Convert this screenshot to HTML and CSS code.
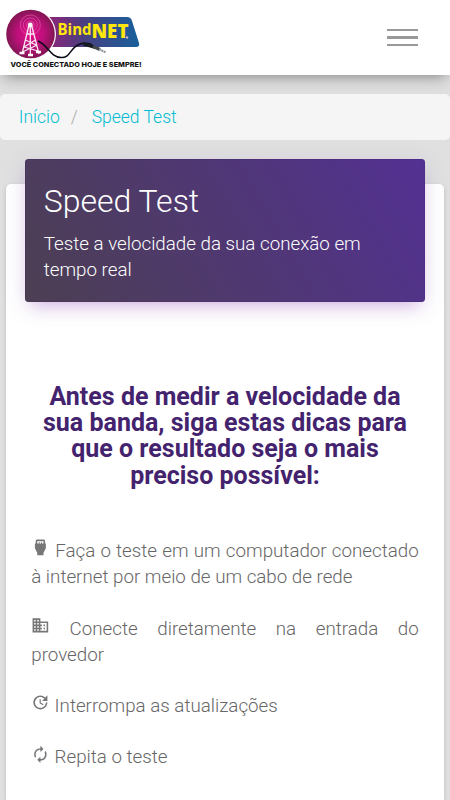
FILE: index.html
```html
<!DOCTYPE html>
<html lang="pt-BR">
<head>
<meta charset="utf-8">
<title>Speed Test - BindNET</title>
<link rel="stylesheet" href="styles.css">
</head>
<body>
<header class="navbar">
  <svg class="logo" viewBox="0 0 150 75" role="img" aria-label="BindNET">
    <defs>
      <linearGradient id="banner"><stop stop-color="#8f2379"/><stop offset=".4" stop-color="#484081"/><stop offset="1" stop-color="#17609b"/></linearGradient>
      <radialGradient id="disc"><stop stop-color="#e30b88"/><stop offset=".55" stop-color="#bd107a"/><stop offset="1" stop-color="#811653"/></radialGradient>
    </defs>
    <path d="M48 17H127Q131 17 132 21L139 43Q140 47 136 47H48Z" fill="url(#banner)"/>
    <circle cx="31" cy="34" r="25" fill="#fff"/>
    <circle cx="30.5" cy="34" r="24.3" fill="url(#disc)"/>
    <g fill="none" stroke="#ef72b5" stroke-width=".5"><circle cx="30.3" cy="25" r="4"/><circle cx="30.3" cy="25" r="7"/><circle cx="30.3" cy="25" r="10"/></g>
    <path d="M29 25L22 54M31.5 25L39 54M30.3 25V55M27 34H34M25.5 40L36 45M35.5 40L24 47M24 47L38 51M37 45L22.5 52" fill="none" stroke="#f9e8f3" stroke-width="1.3"/>
    <path d="M19.5 53H24.5M28 55H33M36 52H41" stroke="#fff" stroke-width="2.3"/>
    <circle cx="30.3" cy="25" r="2.4" fill="#fff"/>
    <path d="M38 41C48 45 50 57 61 57.5C71 58 70 47 80 44Q84 42.5 91 44" fill="none" stroke="#080b16" stroke-width="1.5"/>
    <path d="M83 42L93 44.5L95 49L83 45.5Z" fill="#171b22"/>
    <path d="M93 46.5L100 49.5" stroke="#454a50" stroke-width="3"/>
    <path d="M99 49.2L105.5 52.2" stroke="#92959a" stroke-width="2.2" stroke-dasharray="2 .6"/>
    <text class="logo-name" x="57.5" y="37.5" textLength="71" lengthAdjust="spacingAndGlyphs"><tspan class="logo-bind" dy="-2.5">Bind</tspan><tspan dy="2.5">NET</tspan></text>
    <circle cx="127" cy="37.5" r="1.2" fill="#c7b8c0"/>
    <text class="logo-tag" x="10.5" y="67" textLength="131" lengthAdjust="spacingAndGlyphs">VOCÊ CONECTADO HOJE E SEMPRE!</text>
  </svg>
  <button class="menu" aria-label="Menu"><span></span><span></span><span></span></button>
</header>
<nav class="breadcrumb"><a href="#">Início</a><span class="slash">/</span><a href="#">Speed Test</a></nav>
<main class="card">
  <div class="card-header">
    <h1>Speed Test</h1>
    <p>Teste a velocidade da sua conexão em tempo real</p>
  </div>
  <section class="tips">
    <h2>Antes de medir a velocidade da sua banda, siga estas dicas para que o resultado seja o mais preciso possível:</h2>
    <p><svg class="icon" viewBox="0 0 24 24"><path d="M18 7V4c0-1.1-.9-2-2-2H8c-1.1 0-2 .9-2 2v3H5v6l3 6v3h8v-3l3-6V7h-1zM8 4h8v3h-2V5h-1v2h-2V5h-1v2H8V4z"/></svg> Faça o teste em um computador conectado à internet por meio de um cabo de rede</p>
    <p><svg class="icon" viewBox="0 0 24 24"><path d="M12 7V3H2v18h20V7H12zM6 19H4v-2h2v2zm0-4H4v-2h2v2zm0-4H4V9h2v2zm0-4H4V5h2v2zm4 12H8v-2h2v2zm0-4H8v-2h2v2zm0-4H8V9h2v2zm0-4H8V5h2v2zm10 12h-8v-2h2v-2h-2v-2h2v-2h-2V9h8v10zm-2-8h-2v2h2v-2zm0 4h-2v2h2v-2z"/></svg> Conecte diretamente na entrada do provedor</p>
    <p><svg class="icon" viewBox="0 0 24 24"><path d="M21 10.12h-6.78l2.74-2.82c-2.73-2.7-7.15-2.8-9.88-.1-2.73 2.71-2.73 7.08 0 9.79s7.15 2.71 9.88 0C18.32 15.65 19 14.08 19 12.1h2c0 1.98-.88 4.55-2.64 6.29-3.51 3.48-9.21 3.48-12.72 0-3.5-3.47-3.53-9.11-.02-12.58s9.14-3.47 12.65 0L21 3v7.12zM12.5 8v4.25l3.5 2.08-.72 1.21L11 13V8h1.5z"/></svg> Interrompa as atualizações</p>
    <p><svg class="icon" viewBox="0 0 24 24"><path d="M12 6v3l4-4-4-4v3c-4.42 0-8 3.58-8 8 0 1.57.46 3.03 1.24 4.26L6.7 14.8c-.45-.83-.7-1.79-.7-2.8 0-3.31 2.69-6 6-6zm6.76 1.74L17.3 9.2c.44.84.7 1.79.7 2.8 0 3.31-2.69 6-6 6v-3l-4 4 4 4v-3c4.42 0 8-3.58 8-8 0-1.57-.46-3.03-1.24-4.26z"/></svg> Repita o teste</p>
  </section>
</main>
</body>
</html>
```
FILE: styles.css
```css
* { box-sizing: border-box; }
html { height: 100%; overflow: hidden; }
body {
  display: flex;
  flex-direction: column;
  height: 800px;
  margin: 0;
  overflow: hidden;
  background: #e0e0e0;
  color: #666;
  font-family: Roboto, sans-serif;
  font-weight: 300;
}
.navbar {
  position: relative;
  display: flex;
  flex: none;
  align-items: center;
  justify-content: space-between;
  height: 75px;
  padding-right: 32px;
  background: #fff;
  box-shadow: 0 5px 22px rgba(0, 0, 0, .08), 0 6px 12px -5px rgba(0, 0, 0, .36);
}
.logo { width: 150px; height: 75px; }
.logo-name { font: 800 20px "Open Sans", sans-serif; fill: #ffe70a; }
.logo-bind { font-size: 16px; font-weight: 700; }
.logo-tag { font: 800 6.5px Inter, sans-serif; fill: #111; }
.menu {
  display: flex;
  flex-direction: column;
  gap: 5.3px;
  width: 31px;
  padding: 0;
  border: 0;
  background: none;
}
.menu span { height: 2.3px; background: #999; }
.breadcrumb {
  position: relative;
  display: flex;
  flex: none;
  height: 46px;
  margin-top: 19px;
  padding: 0 18.75px 1px;
  align-items: center;
  border-radius: 5px;
  background: #f5f5f5;
  font-size: 17.5px;
}
.breadcrumb a { color: #00bcd4; text-decoration: none; }
.slash { margin: 0 14px 0 11px; color: #aaa; }
.card {
  flex: 1;
  margin: 43.5px 6.25px 0;
  padding: 0 18.75px;
  border-radius: 5px 5px 0 0;
  background: #fff;
  box-shadow: 0 2px 5px rgba(0, 0, 0, .14);
}
.card-header {
  position: relative;
  top: -25px;
  height: 143.5px;
  padding: 22px 18.75px 0;
  border-radius: 4px;
  background: linear-gradient(60deg, #4c3f52, #533193);
  color: #fff;
  box-shadow: 0 5px 25px rgba(100, 60, 160, .14), 0 9px 16px -8px rgba(156, 39, 176, .32), inset 0 0 1px #21005e;
}
.card-header h1 { margin: 0; font-size: 32px; font-weight: 300; line-height: 40px; }
.card-header p { margin: 10px 0 0; font-size: 18.75px; line-height: 26.25px; }
.tips { padding: 57px 6.25px 0; }
.tips h2 {
  margin: 0 0 49.2px;
  color: #44236e;
  font-size: 25px;
  font-weight: 700;
  line-height: 26.2px;
  text-align: center;
}
.tips p { margin: 0 0 25px; font-size: 18.75px; line-height: 26.25px; text-align: justify; }
.tips p:last-child { margin-bottom: 0; }
.icon { width: 18.75px; height: 18.75px; fill: #777; vertical-align: baseline; }
```
